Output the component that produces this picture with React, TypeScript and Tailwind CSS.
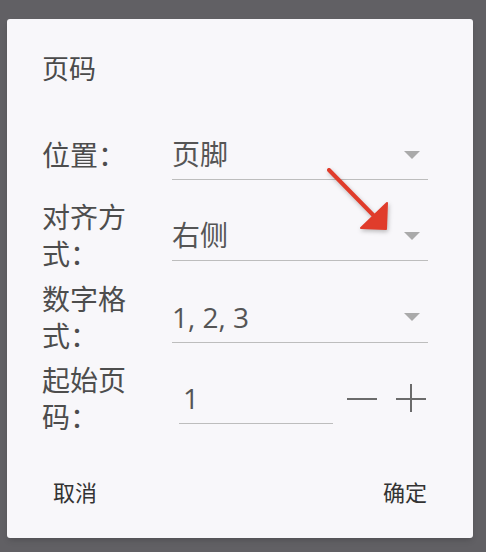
import React from 'react'

const FONT = { fontFamily: '"Open Sans", "Noto Sans CJK SC", sans-serif' }

function Caret() {
  return (
    <svg width="16" height="8" viewBox="0 0 16 8" className="shrink-0">
      <polygon points="0,0 16,0 8,8" fill="#aaaaaa" />
    </svg>
  )
}

function SelectRow({ label, value }: { label: string; value: string }) {
  return (
    <div className="flex items-center h-[50px]">
      <div className="w-[130px] shrink-0">
        <div className="w-[88px] text-[28px] leading-[37px] text-[#4d4d4d]">{label}</div>
      </div>
      <div className="flex-1 h-full flex items-center justify-between border-b border-[#bdbdbd] pr-[8px]">
        <span className="text-[28px] leading-[37px] text-[#555555]">{value}</span>
        <Caret />
      </div>
    </div>
  )
}

export default function App() {
  return (
    <div className="h-[552px] w-[486px] bg-[#616064] pt-[19px] pl-[7px]" style={FONT}>
      <div className="relative w-[466px] h-[519px] bg-[#f8f7fa] rounded-[3px] shadow-md">
        <div className="pl-[35px] pr-[45px] pt-[32px]">
          <div className="text-[27px] leading-[36px] text-[#4a4a4a]">页码</div>

          <div className="mt-[43px] flex flex-col gap-[31.3px]">
            <SelectRow label="位置：" value="页脚" />
            <SelectRow label="对齐方式：" value="右侧" />
            <SelectRow label="数字格式：" value="1, 2, 3" />

            <div className="flex items-center h-[50px]">
              <div className="w-[130px] shrink-0">
                <div className="w-[88px] text-[28px] leading-[37px] text-[#4d4d4d]">起始页码：</div>
              </div>
              <div className="ml-[7px] w-[154px] h-full flex items-center border-b border-[#bdbdbd] pl-[4px]">
                <span className="text-[28px] leading-[37px] text-[#555555]">1</span>
              </div>
              <button type="button" className="ml-[14px] w-[30px] h-[30px] flex items-center justify-center">
                <span className="block w-[30px] h-[2px] bg-[#6b6b6b]" />
              </button>
              <button type="button" className="ml-[19px] w-[30px] h-[30px] relative flex items-center justify-center">
                <span className="block w-[30px] h-[2px] bg-[#6b6b6b]" />
                <span className="absolute left-[14px] top-0 w-[2px] h-[28px] bg-[#6b6b6b]" />
              </button>
            </div>
          </div>
        </div>

        <div className="mt-[45px] px-[46px] h-[48px] flex items-center justify-between">
          <button type="button" className="text-[22px] text-[#333333]">取消</button>
          <button type="button" className="text-[22px] text-[#333333]">确定</button>
        </div>

        {/* red annotation arrow */}
        <svg
          className="absolute left-0 top-0 pointer-events-none"
          width="466"
          height="519"
          viewBox="0 0 466 519"
          style={{ filter: 'drop-shadow(1px 2px 2px rgba(0,0,0,0.25))' }}
        >
          <line x1="322" y1="151" x2="372" y2="202" stroke="#e03c2b" strokeWidth="4" strokeLinecap="round" />
          <polygon points="354,209 380,184 379,210" fill="#e03c2b" stroke="#e03c2b" strokeWidth="2" strokeLinejoin="round" />
        </svg>
      </div>
    </div>
  )
}
